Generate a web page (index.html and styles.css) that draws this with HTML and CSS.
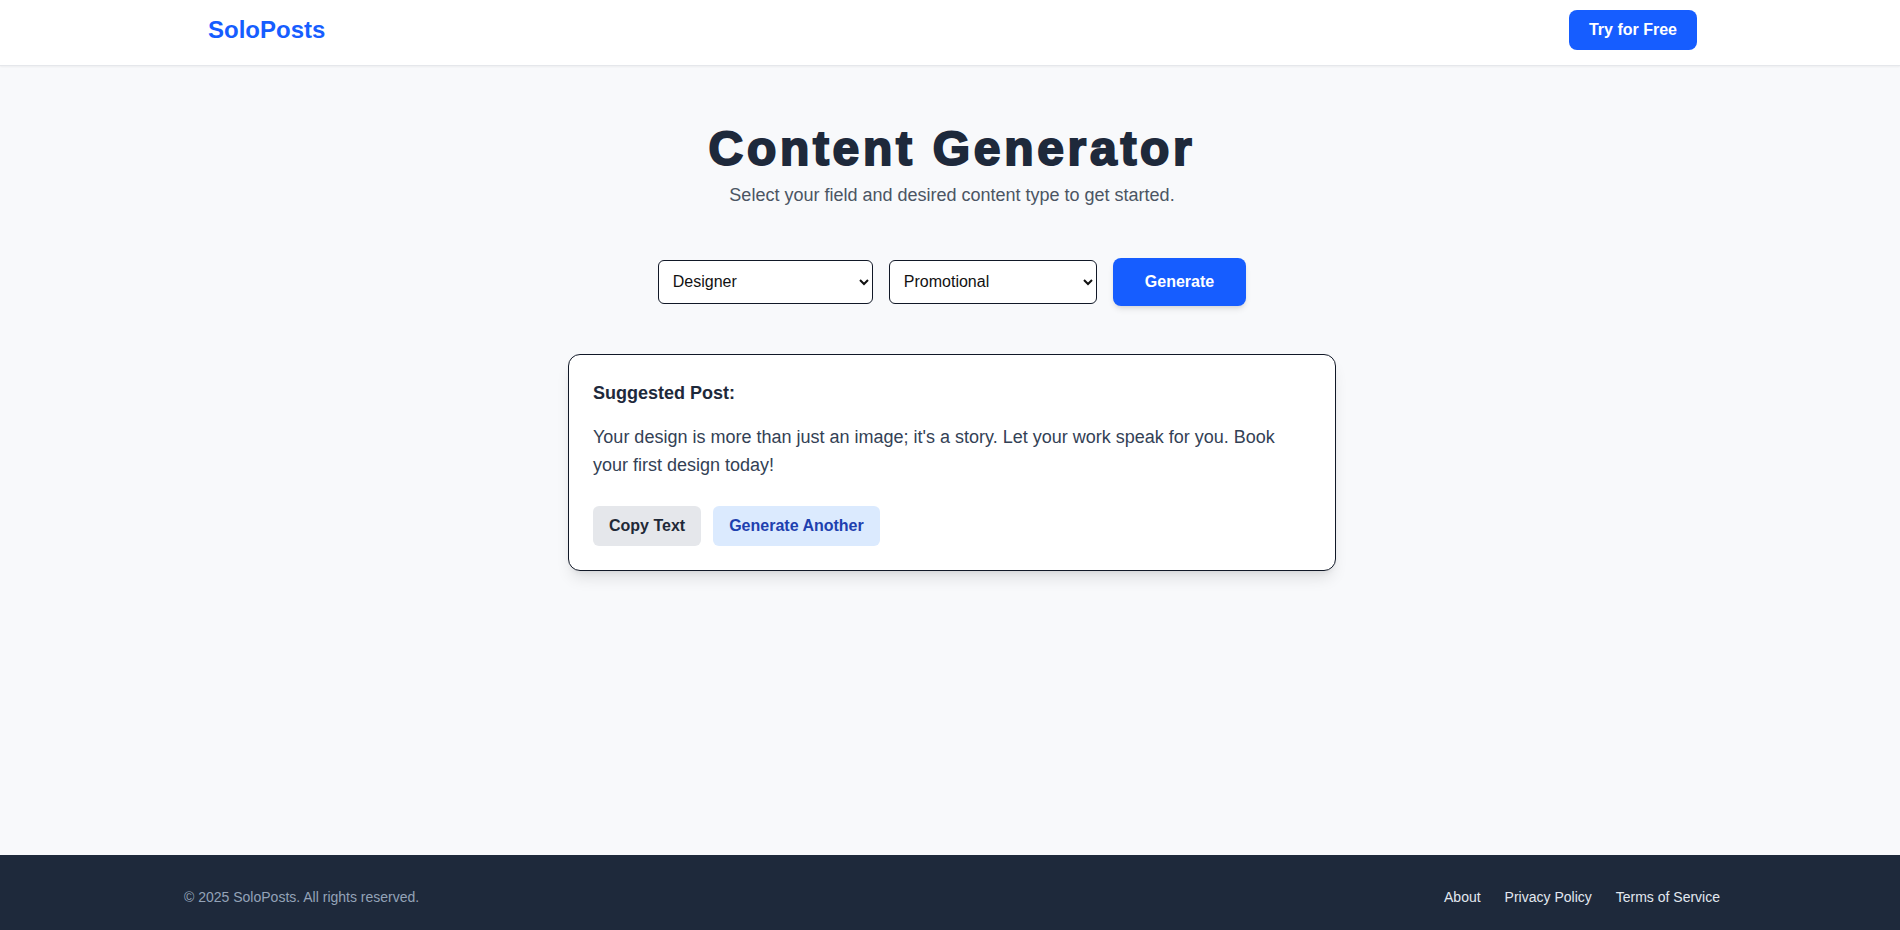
FILE: index.html
```html
<!DOCTYPE html>
<html lang="en">
<head>
  <meta charset="UTF-8">
  <title>SoloPosts – Content Generator</title>
  <link rel="stylesheet" href="styles.css">
</head>
<body>
  <header class="site-header">
    <div class="header-inner">
      <a href="#" class="logo">SoloPosts</a>
      <a href="#" class="btn-primary btn-try">Try for Free</a>
    </div>
  </header>

  <main class="main">
    <h1 class="title">Content Generator</h1>
    <p class="subtitle">Select your field and desired content type to get started.</p>

    <div class="controls">
      <select id="field" class="select select-field">
        <option>Designer</option>
        <option>Developer</option>
        <option>Writer</option>
        <option>Coach</option>
      </select>
      <select id="contentType" class="select select-type">
        <option>Promotional</option>
        <option>Educational</option>
        <option>Personal</option>
      </select>
      <button class="btn-primary btn-generate">Generate</button>
    </div>

    <div class="card">
      <h2 class="card-title">Suggested Post:</h2>
      <p class="card-text">Your design is more than just an image; it's a story. Let your work speak for you. Book your first design today!</p>
      <div class="card-actions">
        <button class="btn-copy">Copy Text</button>
        <button class="btn-another">Generate Another</button>
      </div>
    </div>
  </main>

  <footer class="site-footer">
    <div class="footer-inner">
      <p class="copyright">&copy; 2025 SoloPosts. All rights reserved.</p>
      <nav class="footer-links">
        <a href="#">About</a>
        <a href="#">Privacy Policy</a>
        <a href="#">Terms of Service</a>
      </nav>
    </div>
  </footer>
</body>
</html>
```

FILE: styles.css
```css
:root {
  --primary: #165dff;
  --dark: #1e293b;
  --text: #334155;
  --muted: #4b5563;
  --light-bg: #f8f9fb;
}

* {
  box-sizing: border-box;
}

body {
  margin: 0;
  font-family: 'Liberation Sans', Arial, sans-serif;
  background-color: var(--light-bg);
  color: var(--dark);
  min-height: 100vh;
  display: flex;
  flex-direction: column;
}

a {
  text-decoration: none;
}

/* header */
.site-header {
  background: #fff;
  border-bottom: 1px solid #e5e7eb;
  box-shadow: 0 1px 2px rgba(0, 0, 0, 0.05);
  padding: 10px 0 15px;
}

.header-inner {
  max-width: 1536px;
  margin: 0 auto;
  padding: 0 21px 0 26px;
  display: flex;
  justify-content: space-between;
  align-items: center;
}

.logo {
  font-size: 24px;
  font-weight: 700;
  color: var(--primary);
  line-height: 28px;
}

.btn-primary {
  background-color: var(--primary);
  color: #fff;
  font-family: inherit;
  font-weight: 700;
  font-size: 16px;
  border: none;
  border-radius: 8px;
  cursor: pointer;
}

.btn-try {
  display: inline-block;
  padding: 10px 20px;
  line-height: 20px;
}

/* main */
.main {
  flex: 1;
  display: flex;
  flex-direction: column;
  align-items: center;
  padding: 54px 24px 0 28px;
}

.title {
  margin: 0 0 4px;
  font-size: 48px;
  line-height: 1.2;
  font-weight: 900;
  letter-spacing: 3.7px;
  color: var(--dark);
  -webkit-text-stroke: 2px var(--dark);
}

.subtitle {
  margin: 0;
  font-size: 18px;
  line-height: 1.5;
  color: var(--muted);
}

.controls {
  margin-top: 49px;
  display: flex;
  align-items: center;
  gap: 16px;
}

.select {
  height: 44px;
  padding: 0 10px;
  font-family: inherit;
  font-size: 16px;
  color: #111;
  background-color: #fff;
  border: 1px solid #111827;
  border-radius: 6px;
}

.select-field {
  width: 215px;
}

.select-type {
  width: 208px;
}

.btn-generate {
  padding: 12px 32px;
  line-height: 24px;
  box-shadow: 0 4px 6px -1px rgba(0, 0, 0, 0.1), 0 2px 4px -2px rgba(0, 0, 0, 0.1);
}

/* result card */
.card {
  margin-top: 48px;
  width: 768px;
  background: #fff;
  border: 1px solid #111827;
  border-radius: 12px;
  padding: 25px 24px 24px;
  box-shadow: 0 10px 15px -3px rgba(0, 0, 0, 0.1), 0 4px 6px -4px rgba(0, 0, 0, 0.1);
}

.card-title {
  margin: 0 0 16px;
  font-size: 18px;
  line-height: 27px;
  font-weight: 700;
  color: var(--dark);
}

.card-text {
  margin: 0 0 26px;
  font-size: 18px;
  line-height: 1.6;
  color: var(--text);
}

.card-actions {
  display: flex;
  gap: 12px;
}

.card-actions button {
  font-family: inherit;
  font-size: 16px;
  font-weight: 700;
  line-height: 24px;
  padding: 8px 16px;
  border: none;
  border-radius: 6px;
  cursor: pointer;
}

.btn-copy {
  background-color: #e5e7eb;
  color: #1f2937;
}

.btn-another {
  background-color: #dbeafe;
  color: #1e40af;
}

/* footer */
.site-footer {
  background-color: var(--dark);
  padding: 32px 0 23px;
}

.footer-inner {
  max-width: 1540px;
  margin: 0 auto;
  padding-left: 4px;
  display: flex;
  justify-content: space-between;
  align-items: center;
  font-size: 14px;
  line-height: 20px;
}

.copyright {
  margin: 0;
  color: #94a3b8;
}

.footer-links {
  display: flex;
  gap: 24px;
}

.footer-links a {
  color: #e2e8f0;
}
```
